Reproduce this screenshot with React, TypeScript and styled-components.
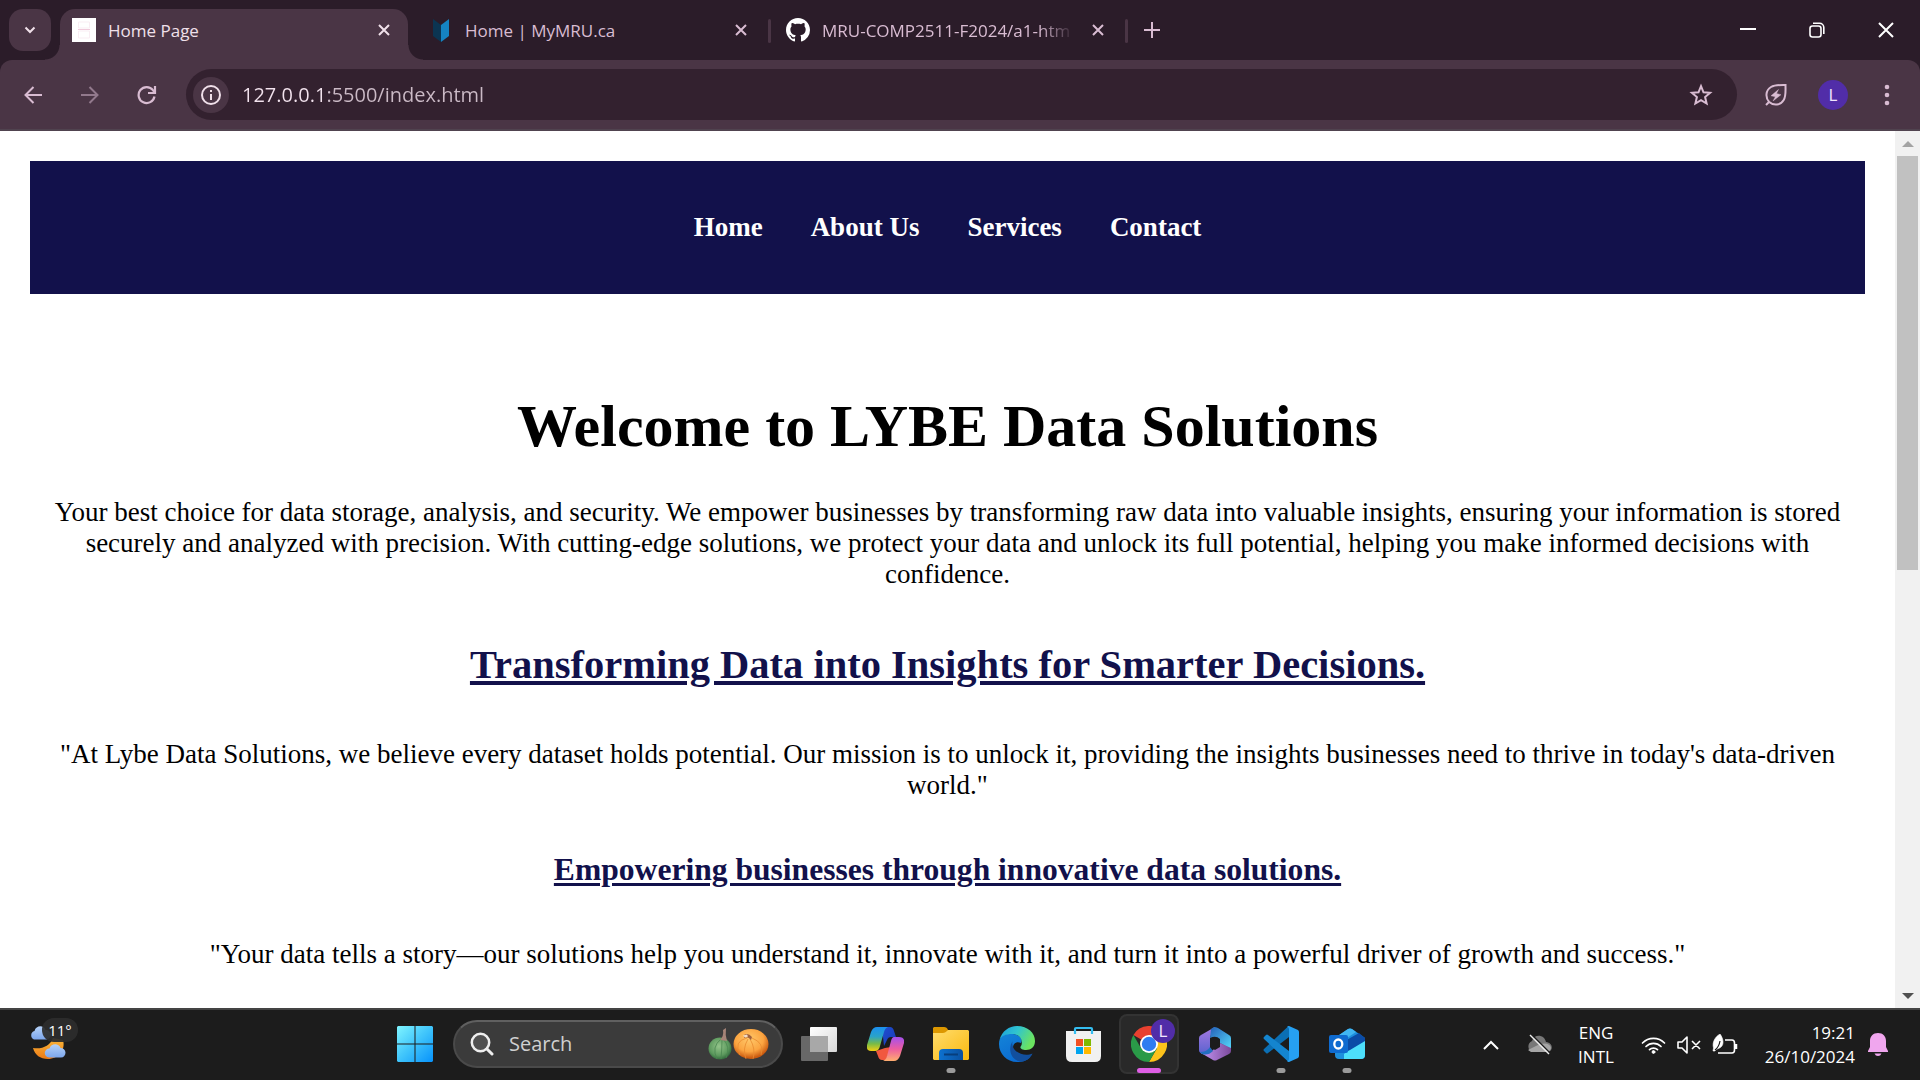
import React from "react";
import styled, { createGlobalStyle, css } from "styled-components";

const ui = '"Open Sans", "Noto Sans", "Liberation Sans", sans-serif';
const navy = "#12114b";
const strip = "#2b1c29";
const plum = "#4a3545";
const pink = "#d9bcd2";

const GlobalStyle = createGlobalStyle`
  *, *::before, *::after { box-sizing: border-box; }
  body { margin: 0; background: #fff; }
  button, input { font: inherit; color: inherit; border: 0; padding: 0; background: none; outline: none; }
  svg { display: block; flex: none; }
`;

const Desktop = styled.div`
  display: flex;
  flex-direction: column;
  height: 100vh;
  overflow: hidden;
`;

/* ---------- browser chrome ---------- */

const TabStrip = styled.header`
  display: flex;
  align-items: flex-end;
  height: 60px;
  padding-left: 9px;
  background: ${strip};
  color: ${pink};
  font: 17px/24px ${ui};
`;

const StripButton = styled.button<{ $filled?: boolean }>`
  display: grid;
  place-items: center;
  width: 42px;
  height: 42px;
  margin-bottom: 9px;
  border-radius: 14px;
  color: ${(p) => (p.$filled ? "#f0e0ea" : pink)};
  background: ${(p) => (p.$filled ? plum : "transparent")};
`;

const Divider = styled.span<{ $visible?: boolean }>`
  flex: none;
  width: 3px;
  height: 24px;
  margin: 0 3px 17px;
  border-radius: 2px;
  background: ${(p) => (p.$visible ? plum : "transparent")};
`;

const activeTab = css`
  background: ${plum};
  color: #f0e0ea;
  &::before,
  &::after {
    content: "";
    position: absolute;
    bottom: 0;
    width: 15px;
    height: 15px;
  }
  &::before {
    right: 100%;
    background: radial-gradient(circle at 0 0, transparent 14px, ${plum} 15px);
  }
  &::after {
    left: 100%;
    background: radial-gradient(circle at 100% 0, transparent 14px, ${plum} 15px);
  }
`;

const TabBox = styled.div<{ $active?: boolean }>`
  position: relative;
  display: flex;
  align-items: center;
  gap: 12px;
  flex: 0 1 348px;
  min-width: 0;
  height: 51px;
  padding: 0 12px 9px;
  border-radius: 15px 15px 0 0;
  ${(p) => p.$active && activeTab}
`;

const TabTitle = styled.span<{ $fade?: boolean }>`
  flex: 1;
  min-width: 0;
  padding-top: 2px;
  overflow: hidden;
  white-space: nowrap;
  ${(p) => p.$fade && "mask-image: linear-gradient(90deg, #000 calc(100% - 36px), transparent);"}
`;

const TabClose = styled.button`
  display: grid;
  place-items: center;
  width: 24px;
  height: 24px;
`;

const WindowControls = styled.div`
  display: flex;
  margin-left: auto;
  color: #fff;
`;

const WindowButton = styled.button`
  display: grid;
  place-items: center;
  width: 69px;
  height: 60px;
`;

const ToolbarBack = styled.div`
  background: ${strip};
`;

const Toolbar = styled.div`
  display: flex;
  align-items: center;
  gap: 15px;
  height: 71px;
  padding: 0 15px 0 12px;
  border-bottom: 2px solid #50434f;
  border-radius: 12px 12px 0 0;
  background: ${plum};
  color: ${pink};
`;

const ToolButton = styled.button<{ $dim?: boolean; $narrow?: boolean }>`
  display: grid;
  place-items: center;
  width: ${(p) => (p.$narrow ? 36 : 42)}px;
  height: 42px;
  opacity: ${(p) => (p.$dim ? 0.5 : 1)};
`;

const Omnibox = styled.div`
  display: flex;
  align-items: center;
  flex: 1;
  height: 51px;
  margin: 0 3px;
  padding: 0 15px 0 7px;
  border-radius: 26px;
  background: #33212f;
`;

const InfoButton = styled.button`
  display: grid;
  place-items: center;
  width: 36px;
  height: 36px;
  border-radius: 50%;
  background: ${plum};
  color: #f0e0ea;
`;

const Address = styled.input`
  flex: 1;
  min-width: 0;
  height: 32px;
  margin-left: 13px;
  font: 20px/32px ${ui};
  color: transparent;
  background: linear-gradient(90deg, #f3e3ee 82px, #cbbac6 82px);
  background-clip: text;
`;

const Avatar = styled.span<{ $size: number }>`
  display: grid;
  place-items: center;
  width: ${(p) => p.$size}px;
  height: ${(p) => p.$size}px;
  border-radius: 50%;
  background: #512da8;
  color: #f1e6ff;
  font: 17px/24px ${ui};
`;

/* ---------- web page ---------- */

const Viewport = styled.div`
  display: flex;
  flex: 1;
  min-height: 0;
  background: #fff;
`;

const Page = styled.main`
  flex: 1;
  min-width: 0;
  overflow: hidden;
  padding: 30px;
  color: #000;
  font: 27px/31px "Liberation Serif", "Times New Roman", serif;
  text-align: center;
`;

const SiteNav = styled.nav`
  padding: 51px 30px;
  background: ${navy};
`;

const NavList = styled.ul`
  display: flex;
  justify-content: center;
  gap: 48px;
  margin: 0;
  padding: 0;
  list-style: none;
`;

const NavLink = styled.a`
  color: #fff;
  font-weight: bold;
  text-decoration: none;
`;

const Hero = styled.section`
  padding: 98px 15px 0;
`;

const Title = styled.h1`
  margin: 0;
  font-size: 60px;
  line-height: 69px;
`;

const Heading = styled.h2`
  margin: 0;
  color: ${navy};
  line-height: 47px;
  text-decoration: underline 4px;
  text-underline-offset: 3px;
`;

const SubHeading = styled.h3`
  margin: 0;
  color: ${navy};
  line-height: 36px;
  text-decoration: underline 3px;
  text-underline-offset: 3px;
`;

const Text = styled.p<{ $top: number; $bottom: number }>`
  margin: ${(p) => p.$top}px 0 ${(p) => p.$bottom}px;
`;

const Scrollbar = styled.div`
  display: flex;
  flex-direction: column;
  width: 25px;
  background: #f1f1f1;
`;

const ScrollArrow = styled.button<{ $color: string }>`
  display: grid;
  place-items: center;
  height: 25px;
  color: ${(p) => p.$color};
`;

const ScrollTrack = styled.div`
  flex: 1;
  padding: 0 2px;
`;

const ScrollThumb = styled.div`
  height: 50%;
  background: #c1c1c1;
`;

/* ---------- taskbar ---------- */

const Taskbar = styled.footer`
  display: flex;
  align-items: stretch;
  height: 72px;
  border-top: 2px solid #444;
  background: #1c1c1c;
  color: #fff;
  font: 17px/24px ${ui};
`;

const Widgets = styled.div`
  flex: 0 0 382px;
  display: flex;
  align-items: center;
  padding-left: 30px;
`;

const WeatherButton = styled.button`
  position: relative;
  width: 48px;
  height: 54px;
`;

const Temperature = styled.span`
  position: absolute;
  top: 0;
  right: 0;
  width: 36px;
  height: 24px;
  border-radius: 12px;
  background: #2d2d2dee;
  font: 15px/24px ${ui};
`;

const TaskSlot = styled.button<{ $active?: boolean }>`
  position: relative;
  display: grid;
  place-items: center;
  width: 60px;
  height: 60px;
  margin: 4px 3px 0;
  border: 2px solid ${(p) => (p.$active ? "#333" : "transparent")};
  border-radius: 8px;
  background: ${(p) => (p.$active ? "#292929" : "transparent")};
`;

const Indicator = styled.span<{ $active?: boolean }>`
  position: absolute;
  bottom: -1px;
  left: 50%;
  width: ${(p) => (p.$active ? 24 : 9)}px;
  height: 5px;
  border-radius: 3px;
  background: ${(p) => (p.$active ? "#df5fe6" : "#9a9a9a")};
  transform: translateX(-50%);
`;

const AccountBadge = styled.span`
  position: absolute;
  top: 3px;
  right: 2px;
`;

const SearchBox = styled.label`
  display: flex;
  align-items: center;
  width: 330px;
  height: 48px;
  margin: 10px 3px 0 5px;
  padding: 0 12px 0 15px;
  border: 2px solid #4a4a4a;
  border-top-color: #606060;
  border-radius: 24px;
  background: #3b3b3b;
`;

const SearchInput = styled.input`
  flex: 1;
  min-width: 0;
  margin-left: 15px;
  font: 20px/28px ${ui};
  &::placeholder { color: #d0d0d0; opacity: 1; }
`;

const Tray = styled.div`
  display: flex;
  align-items: center;
  margin-left: auto;
  padding-right: 24px;
`;

const TrayButton = styled.button<{ $space?: number }>`
  display: grid;
  place-items: center;
  width: 36px;
  height: 48px;
  margin-right: ${(p) => p.$space ?? 0}px;
`;

const Language = styled.button`
  width: 48px;
  margin-right: 15px;
  text-align: center;
`;

const Clock = styled.button`
  width: 117px;
  padding-right: 5px;
  text-align: right;
`;

/* ---------- icons ---------- */

type StrokeProps = { size: number; d: string; width?: number; box?: number };

const Stroke = ({ size, d, width = 2, box = 24 }: StrokeProps) => (
  <svg width={size} height={size} viewBox={`0 0 ${box} ${box}`} fill="none" stroke="currentColor" strokeWidth={width}>
    <path d={d} />
  </svg>
);

const Cross = () => <Stroke size={12} box={12} d="M1 1l10 10M11 1L1 11" />;

const HomeFavicon = () => (
  <svg width="24" height="24">
    <path fill="#fff" d="M0 0h24v24H0z" />
    <path fill="none" stroke="#f9edf3" d="M6.500 4h11v6h-11zM6.500 13h11v7h-11z" />
    <path stroke="#f0cbdc" d="M6 11.500h12" />
  </svg>
);

const MruFavicon = () => (
  <svg width="24" height="24">
    <path fill="#0b3552" d="M4 1l8 6v17l-8-6z" />
    <path fill="#1583c2" d="M20 1l-8 6v17l8-6z" />
  </svg>
);

const GithubIcon = () => (
  <svg width="24" height="24" viewBox="0 0 16 16">
    <path
      fill="#fff"
      d="M8 0C3.580 0 0 3.580 0 8c0 3.540 2.290 6.530 5.470 7.590.4.070.55-.17.55-.38 0-.19-.01-.82-.01-1.490-2.010.37-2.530-.49-2.690-.94-.09-.23-.48-.94-.82-1.130-.28-.15-.68-.52-.01-.53.63-.01 1.080.58 1.230.82.72 1.210 1.870.87 2.330.66.07-.52.28-.87.51-1.070-1.780-.2-3.640-.89-3.640-3.950 0-.87.31-1.590.82-2.150-.08-.2-.36-1.020.08-2.120 0 0 .67-.21 2.200.82.64-.18 1.320-.27 2-.27s1.360.09 2 .27c1.530-1.040 2.200-.82 2.200-.82.44 1.100.16 1.920.08 2.120.51.56.82 1.270.82 2.150 0 3.070-1.870 3.750-3.650 3.950.29.25.54.73.54 1.480 0 1.070-.01 1.930-.01 2.200 0 .21.15.46.55.38A8.010 8.010 0 0 0 16 8c0-4.420-3.580-8-8-8z"
    />
  </svg>
);

const ReloadIcon = () => (
  <svg width="20" height="20" viewBox="0 0 20 20" fill="none" stroke="currentColor" strokeWidth="2.200">
    <path d="M17.500 11.500A8 8 0 1 1 16 5.200L17.500 7" />
    <path d="M18 1v7h-7" />
  </svg>
);

const RestoreIcon = () => (
  <svg width="16" height="16" fill="none" stroke="currentColor" strokeWidth="1.600">
    <rect x="1" y="4" width="11" height="11" rx="2.500" />
    <path d="M4 1.200h6.500a4.300 4.300 0 0 1 4.300 4.300V12" />
  </svg>
);

const InfoIcon = () => (
  <svg width="20" height="20" fill="none" stroke="currentColor" strokeWidth="2">
    <circle cx="10" cy="10" r="9" />
    <path d="M10 9v6M10 5v2" />
  </svg>
);

const StarIcon = () => (
  <svg width="24" height="24" viewBox="0 0 24 24" fill="none" stroke="currentColor" strokeWidth="2">
    <path d="M12 3.200l2.500 6.100 6.600.5-5 4.300 1.500 6.400-5.600-3.400-5.600 3.400 1.500-6.400-5-4.300 6.600-.5z" />
  </svg>
);

const LeafIcon = () => (
  <svg width="24" height="24" viewBox="0 0 24 24" fill="none" stroke="currentColor" strokeWidth="2">
    <path d="M2 22l3-3M5.200 19C1 14.500 1.700 7 7 4c4-2.300 9-2 14.500-2 0 6 .6 11-1.800 15-3.200 5.400-10 6-14.500 2z" />
    <path fill="currentColor" strokeWidth=".4" d="M14.500 6.500L7 12.800l4.300 1-2.300 4.200 8-6.300-4.500-1.200z" />
  </svg>
);

const DotsIcon = () => (
  <svg width="6" height="24" fill="currentColor">
    <circle cx="3" cy="4" r="2.300" />
    <circle cx="3" cy="12" r="2.300" />
    <circle cx="3" cy="20" r="2.300" />
  </svg>
);

const WeatherIcon = () => (
  <svg width="48" height="54" viewBox="0 0 48 54">
    <defs>
      <linearGradient id="cloud" x2="0" y2="1">
        <stop stopColor="#b5d2f8" />
        <stop offset="1" stopColor="#7ca6ec" />
      </linearGradient>
      <linearGradient id="moon" x2="0" y2="1">
        <stop stopColor="#fbb93a" />
        <stop offset="1" stopColor="#ec7a16" />
      </linearGradient>
    </defs>
    <path fill="url(#cloud)" d="M4 21.500a4.500 4.500 0 0 1 .5-8.500C6 7 14 7 15.500 12a4.700 4.700 0 0 1 1 9.500z" />
    <path fill="url(#moon)" d="M3 30c9 1.500 17-2 20-10l10 2c3 10-5 19-15 19C10 41 5 37 3 30z" />
    <path fill="url(#cloud)" d="M19 39.500a4.500 4.500 0 0 1 .5-9C21 25 29 25 30.500 30a4.700 4.700 0 0 1 .5 9.500z" />
  </svg>
);

const StartIcon = () => (
  <svg width="36" height="36" viewBox="0 0 35 35">
    <defs>
      <linearGradient id="start" gradientUnits="userSpaceOnUse" x2="35" y2="35">
        <stop stopColor="#80f5ff" />
        <stop offset=".5" stopColor="#3fc4fb" />
        <stop offset="1" stopColor="#0792fb" />
      </linearGradient>
    </defs>
    <path fill="url(#start)" d="M1 0h16v17H0V1zM18 0h16l1 1v16H18zM0 18h17v17H1l-1-1zM18 18h17v16l-1 1H18z" />
  </svg>
);

const SearchIcon = () => (
  <svg width="24" height="24" fill="none" stroke="#eee" strokeWidth="2.500" strokeLinecap="round">
    <circle cx="10.500" cy="10.500" r="8.700" fill="#505050" />
    <path strokeWidth="3" d="M17 17l5 5" />
  </svg>
);

const PumpkinIcon = () => (
  <svg width="62" height="34" viewBox="0 0 62 34">
    <defs>
      <radialGradient id="pumpkin" cx=".45" cy=".35" r=".62">
        <stop stopColor="#ffc86a" />
        <stop offset=".65" stopColor="#fba440" />
        <stop offset="1" stopColor="#c9590f" />
      </radialGradient>
      <radialGradient id="gourd" cx=".45" cy=".4" r=".6">
        <stop stopColor="#93c48a" />
        <stop offset=".7" stopColor="#5d9a5e" />
        <stop offset="1" stopColor="#346b3e" />
      </radialGradient>
    </defs>
    <ellipse cx="13" cy="21.500" rx="11.500" ry="11" fill="url(#gourd)" />
    <path fill="none" stroke="#4a8650" strokeWidth=".8" d="M14 12Q4 20 10 32M15 12Q15 22 14 32M16 12Q24 20 19 31" />
    <path fill="#a68478" d="M13 13q4-4 3-10l3-2q-1 7 1 13z" />
    <ellipse cx="44" cy="17" rx="17.500" ry="15" fill="url(#pumpkin)" />
    <path fill="none" stroke="#e98a30" strokeWidth=".8" d="M40 11Q26 14 33 28M41 12Q35 22 39 32M43 12Q49 22 46 32M45 11Q58 16 54 28" />
    <path fill="#a0603c" d="M37 8q4-3 8 2l-1 3q-3-4-7-2z" />
    <path fill="#f3dcc5" d="M36 8.500l4-1 1 2-3 1z" />
  </svg>
);

const TaskViewIcon = () => (
  <svg width="36" height="36">
    <defs>
      <linearGradient id="pane" x2="1" y2="1">
        <stop stopColor="#fff" />
        <stop offset="1" stopColor="#d8d8d8" />
      </linearGradient>
    </defs>
    <rect x="9" y="1" width="27" height="25" rx="1" fill="url(#pane)" />
    <rect y="10" width="27" height="25" rx="1" fill="#686868" />
    <path fill="#a8a8a8" d="M9 10h18v16H9z" />
  </svg>
);

const CopilotIcon = () => (
  <svg width="37" height="34" viewBox="0 0 37 34">
    <defs>
      <linearGradient id="cpA" x2="0" y2="1">
        <stop stopColor="#1b8ff0" />
        <stop offset=".4" stopColor="#2aa3c8" />
        <stop offset=".7" stopColor="#79bb46" />
        <stop offset="1" stopColor="#f4cf12" />
      </linearGradient>
      <linearGradient id="cpB" x2="0" y2="1">
        <stop stopColor="#a450ee" />
        <stop offset=".5" stopColor="#ed5da0" />
        <stop offset="1" stopColor="#ffae6e" />
      </linearGradient>
      <linearGradient id="cpC" x2="1" y2="1">
        <stop stopColor="#2050cf" />
        <stop offset="1" stopColor="#1738b8" />
      </linearGradient>
    </defs>
    <path fill="url(#cpC)" d="M15 0h8q3 0 4 4l2 6h-5q-3 0-4 3l-3 6z" />
    <path fill="#f1583f" d="M9 24l9-3 6-1-5 13h-4q-3 0-4-4z" />
    <path fill="url(#cpA)" d="M10 0h11q-3 1-4 5l-4 14q-1 5-5 5H4q-5 0-4-6L4 5q2-5 6-5z" />
    <path fill="url(#cpB)" d="M27 10h5q6 0 5 6l-4 13q-2 5-6 5H16q3-1 4-5l4-15q1-4 3-4z" />
  </svg>
);

const FolderIcon = () => (
  <svg width="36" height="34" viewBox="0 0 36 34">
    <defs>
      <linearGradient id="folder" x2="1" y2="1">
        <stop stopColor="#ffdc6d" />
        <stop offset="1" stopColor="#fab90e" />
      </linearGradient>
      <linearGradient id="dock" x2="1">
        <stop stopColor="#0d72d0" />
        <stop offset="1" stopColor="#0a509f" />
      </linearGradient>
    </defs>
    <path fill="#dc9700" d="M1 0h10q3 0 4 3v5H0V1z" />
    <path fill="url(#folder)" d="M0 6h10q2 0 4-2l1-1h20l1 1v28l-1 1H1l-1-1z" />
    <path fill="url(#dock)" d="M6 33V26q0-4 4-4h16q4 0 4 4v7z" />
    <path stroke="#073e7c" strokeWidth="2" d="M11 27.500h14" />
  </svg>
);

const EdgeIcon = () => (
  <svg width="36" height="36" viewBox="0 0 36 36">
    <defs>
      <linearGradient id="edA" x2="1" y2=".4">
        <stop stopColor="#1a9de0" />
        <stop offset=".5" stopColor="#30c4cf" />
        <stop offset="1" stopColor="#6be360" />
      </linearGradient>
      <linearGradient id="edB" x2=".6" y2="1">
        <stop stopColor="#1484d8" />
        <stop offset="1" stopColor="#0a6ad1" />
      </linearGradient>
    </defs>
    <path fill="url(#edB)" d="M0 18C0 8 8 7 14 8c7 1 10 5 8 9-4-2-8 0-8 5 0 7 9 13 17 9-3 4-8 5-13 5C8 36 0 28 0 18z" />
    <path fill="#124f9e" d="M14 15c-5 5-4 20 9 20.500 5-.5 9-4 10.500-8C27 30.500 17 28 14 21c-1-3-1-5 0-6z" />
    <path fill="url(#edA)" d="M.5 14C3 5 10 0 18 0c11 0 18 7 18 15 0 6-4 9-9 9-4 0-7-2-5-4 2-3 1-12-9-12C7 8 2 10 .5 14z" />
  </svg>
);

const StoreIcon = () => (
  <svg width="35" height="36" viewBox="0 0 35 36">
    <path fill="#f1f1f1" d="M0 5h35v25q0 6-6 6H6q-6 0-6-6z" />
    <path fill="none" stroke="#34bdf0" strokeWidth="2.200" d="M9 8V3q0-1 1-1h15q1 0 1 1v5" />
    <path fill="#f25022" d="M10 13h7v7h-7z" />
    <path fill="#7fba00" d="M18 13h7v7h-7z" />
    <path fill="#00a4ef" d="M10 21h7v7h-7z" />
    <path fill="#ffb900" d="M18 21h7v7h-7z" />
  </svg>
);

const ChromeIcon = () => (
  <svg width="36" height="36" viewBox="0 0 36 36">
    <path fill="#e8402f" d="M18 18L2.400 9A18 18 0 0 1 33.600 9z" />
    <path fill="#fcc21b" d="M18 18V9h15.600A18 18 0 0 1 18 36l7.800-13.500z" />
    <path fill="#2a9a48" d="M18 18l7.800 4.500L18 36A18 18 0 0 1 2.400 9l7.800 13.500z" />
    <path fill="#2a9a48" d="M10.200 22.500q7.800 9 15.600 0L18 18z" />
    <circle cx="18" cy="18" r="9" fill="#fff" />
    <circle cx="18" cy="18" r="7.200" fill="#2f7cf0" />
  </svg>
);

const M365Icon = () => (
  <svg width="32" height="34" viewBox="0 0 32 34">
    <defs>
      <linearGradient id="mA" x2="0" y2="1">
        <stop stopColor="#a77be2" />
        <stop offset="1" stopColor="#5b62cf" />
      </linearGradient>
      <linearGradient id="mB" x2="1" y2="1">
        <stop stopColor="#2460b8" />
        <stop offset="1" stopColor="#56d8fa" />
      </linearGradient>
      <linearGradient id="mC" x2="1">
        <stop stopColor="#c596f5" />
        <stop offset="1" stopColor="#7b4a9b" />
      </linearGradient>
    </defs>
    <path fill="url(#mA)" d="M16 0L2 8Q0 9 0 11v12q0 3 4 4 8 1 7-6V10z" />
    <path fill="url(#mB)" d="M12 2l3-2q2 0 4 1l11 7q2 1 2 3v11L21 16v-4q-4-4-10-1z" />
    <path fill="url(#mC)" d="M32 21v3q0 2-2 3l-12 6q-2 1-4 0L2 26q9 0 12-3l7-7z" />
    <path fill="#236fc0" d="M1 25q7 0 10-5l3 4q-5 5-11 3z" />
    <path fill="#1c1c1c" d="M16 11l5 3v6l-5 3-5-3v-6z" />
  </svg>
);

const CodeIcon = () => (
  <svg width="36" height="36" viewBox="0 0 36 36">
    <path fill="#0b6fb4" d="M26 0v11L5 27q-1 1-2 0l-2-2q-1-1 0-2L25 .5z" />
    <path fill="#1485cf" d="M26 36V25L5 9Q4 8 3 9l-2 2q-1 1 0 2l24 22.500z" />
    <path fill="#26a0f2" d="M26 0l9 4q1 1 1 2v24q0 1-1 2l-9 4q-1 0-2-1 2 0 2-2V3q0-2-2-2 1-1 2-1z" />
  </svg>
);

const OutlookIcon = () => (
  <svg width="36" height="32" viewBox="0 0 36 32">
    <path fill="#1d8fdd" d="M6 10L19 1q2-1 4 0l13 9v17q0 4-4 4H10q-4 0-4-4z" />
    <path fill="#40b6f2" d="M10 7l9-6q2-1 4 0l4 3-15 10z" />
    <path fill="#0b4ca6" d="M14 14L30 5l6 5v4L18 25z" />
    <path fill="#4ddffb" d="M36 13v14q0 4-4 4H15v-5q3-3 6-4z" />
    <rect y="7" width="19" height="18" rx="2" fill="#0f6bd0" />
    <ellipse cx="9.300" cy="16" rx="4" ry="4.500" fill="none" stroke="#fff" strokeWidth="2.300" />
  </svg>
);

const CloudOffIcon = () => (
  <svg width="26" height="22" viewBox="0 0 26 22">
    <path fill="#777" d="M6 18a6 6 0 0 1 0-11C8 0 18 0 20 8c8 1 7 10 1 10z" />
    <path fill="#a5a5a5" d="M2 16l12-6q10-2 11 4-1 4-5 4H5z" />
    <path stroke="#1c1c1c" strokeWidth="1.500" d="M6 1l19 19" />
    <path stroke="#eee" strokeWidth="1.500" d="M4 1l19 19" />
  </svg>
);

const WifiIcon = () => (
  <svg width="25" height="18" fill="none" stroke="currentColor" strokeWidth="1.700" strokeLinecap="round">
    <path d="M1.500 7a15.500 15.500 0 0 1 22 0M5 10.500a10.600 10.600 0 0 1 15 0M8.500 13.700a5.700 5.700 0 0 1 8 0" />
    <circle cx="12.500" cy="16" r="1.400" fill="currentColor" strokeWidth="1" />
  </svg>
);

const MuteIcon = () => (
  <svg width="24" height="18" fill="none" stroke="currentColor" strokeWidth="1.600" strokeLinejoin="round">
    <path d="M1 6h4l5-5v16l-5-5H1zM15 5l8 8M23 5l-8 8" />
  </svg>
);

const BatteryIcon = () => (
  <svg width="26" height="22" viewBox="0 0 26 22" fill="none" stroke="currentColor" strokeWidth="1.600">
    <path d="M13 6h7q2.500 0 2.500 3v7q0 3-2.500 3H6" />
    <path strokeWidth="2.500" d="M24 10v5" />
    <path fill="currentColor" strokeWidth=".6" d="M1.500 14C0 8 3 3 8 0c3 4 4.500 10 1 13-2 2-4 1-6 4L1 17z" />
    <path stroke="#1c1c1c" strokeWidth="1.200" d="M3 16q4-3 5-9" />
  </svg>
);

const BellIcon = () => (
  <svg width="20" height="24" fill="#f0a6ee">
    <path d="M10 0c5 0 8 3.500 8 8v6l2 4v1H0v-1l2-4V8c0-4.500 3-8 8-8zM6.500 20.500h7q-1 2.500-3.500 2.500t-3.500-2.500z" />
  </svg>
);

/* ---------- data ---------- */

const tabs = [
  { title: "Home Page", icon: <HomeFavicon />, active: true },
  { title: "Home | MyMRU.ca", icon: <MruFavicon /> },
  { title: "MRU-COMP2511-F2024/a1-htm", icon: <GithubIcon />, fade: true },
];

const links = ["Home", "About Us", "Services", "Contact"];

const apps = [
  { name: "Task view", icon: <TaskViewIcon /> },
  { name: "Copilot", icon: <CopilotIcon /> },
  { name: "File Explorer", icon: <FolderIcon />, running: true },
  { name: "Edge", icon: <EdgeIcon /> },
  { name: "Store", icon: <StoreIcon /> },
  { name: "Chrome", icon: <ChromeIcon />, running: true, active: true },
  { name: "Microsoft 365", icon: <M365Icon /> },
  { name: "Visual Studio Code", icon: <CodeIcon />, running: true },
  { name: "Outlook", icon: <OutlookIcon />, running: true },
];

export default function App() {
  return (
    <Desktop>
      <GlobalStyle />
      <TabStrip>
        <StripButton $filled aria-label="Search tabs">
          <Stroke size={12} box={12} d="M1.500 3.500L6 8l4.500-4.500" />
        </StripButton>
        {tabs.map((tab, i) => (
          <React.Fragment key={tab.title}>
            <Divider $visible={i > 1} />
            <TabBox $active={tab.active}>
              {tab.icon}
              <TabTitle $fade={tab.fade}>{tab.title}</TabTitle>
              <TabClose aria-label="Close tab">
                <Cross />
              </TabClose>
            </TabBox>
          </React.Fragment>
        ))}
        <Divider $visible />
        <StripButton aria-label="New tab">
          <Stroke size={16} box={16} d="M8 0v16M0 8h16" />
        </StripButton>
        <WindowControls>
          <WindowButton aria-label="Minimize">
            <Stroke size={16} box={16} d="M0 7h16" />
          </WindowButton>
          <WindowButton aria-label="Restore">
            <RestoreIcon />
          </WindowButton>
          <WindowButton aria-label="Close">
            <Stroke size={16} box={16} d="M1 1l14 14M15 1L1 15" />
          </WindowButton>
        </WindowControls>
      </TabStrip>

      <ToolbarBack>
        <Toolbar>
          <ToolButton aria-label="Back">
            <Stroke size={18} box={18} d="M18 9H2M9.500 1L1.500 9l8 8" />
          </ToolButton>
          <ToolButton $dim aria-label="Forward">
            <Stroke size={18} box={18} d="M0 9h16M8.500 1l8 8-8 8" />
          </ToolButton>
          <ToolButton aria-label="Reload">
            <ReloadIcon />
          </ToolButton>
          <Omnibox>
            <InfoButton aria-label="Site information">
              <InfoIcon />
            </InfoButton>
            <Address aria-label="Address" defaultValue="127.0.0.1:5500/index.html" spellCheck={false} />
            <ToolButton aria-label="Bookmark">
              <StarIcon />
            </ToolButton>
          </Omnibox>
          <ToolButton aria-label="Energy saver">
            <LeafIcon />
          </ToolButton>
          <ToolButton aria-label="Profile">
            <Avatar $size={30}>L</Avatar>
          </ToolButton>
          <ToolButton $narrow aria-label="Menu">
            <DotsIcon />
          </ToolButton>
        </Toolbar>
      </ToolbarBack>

      <Viewport>
        <Page>
          <SiteNav>
            <NavList>
              {links.map((name) => (
                <li key={name}>
                  <NavLink href="#">{name}</NavLink>
                </li>
              ))}
            </NavList>
          </SiteNav>
          <Hero>
            <Title>Welcome to LYBE Data Solutions</Title>
            <Text $top={36} $bottom={51}>
              Your best choice for data storage, analysis, and security. We empower businesses by transforming raw data
              into valuable insights, ensuring your information is stored securely and analyzed with precision. With
              cutting-edge solutions, we protect your data and unlock its full potential, helping you make informed
              decisions with confidence.
            </Text>
            <Heading>Transforming Data into Insights for Smarter Decisions.</Heading>
            <Text $top={51} $bottom={51}>
              "At Lybe Data Solutions, we believe every dataset holds potential. Our mission is to unlock it, providing
              the insights businesses need to thrive in today's data-driven world."
            </Text>
            <SubHeading>Empowering businesses through innovative data solutions.</SubHeading>
            <Text $top={51} $bottom={0}>
              "Your data tells a story—our solutions help you understand it, innovate with it, and turn it into a
              powerful driver of growth and success."
            </Text>
          </Hero>
        </Page>
        <Scrollbar>
          <ScrollArrow $color="#a3a3a3" aria-label="Scroll up">
            <svg width="12" height="6" fill="currentColor">
              <path d="M0 6l6-6 6 6z" />
            </svg>
          </ScrollArrow>
          <ScrollTrack>
            <ScrollThumb />
          </ScrollTrack>
          <ScrollArrow $color="#505050" aria-label="Scroll down">
            <svg width="12" height="6" fill="currentColor">
              <path d="M0 0l6 6 6-6z" />
            </svg>
          </ScrollArrow>
        </Scrollbar>
      </Viewport>

      <Taskbar>
        <Widgets>
          <WeatherButton aria-label="Weather">
            <WeatherIcon />
            <Temperature>11°</Temperature>
          </WeatherButton>
        </Widgets>
        <TaskSlot aria-label="Start">
          <StartIcon />
        </TaskSlot>
        <SearchBox>
          <SearchIcon />
          <SearchInput placeholder="Search" aria-label="Search" />
          <PumpkinIcon />
        </SearchBox>
        {apps.map((app) => (
          <TaskSlot key={app.name} $active={app.active} aria-label={app.name}>
            {app.icon}
            {app.active && (
              <AccountBadge>
                <Avatar $size={24}>L</Avatar>
              </AccountBadge>
            )}
            {app.running && <Indicator $active={app.active} />}
          </TaskSlot>
        ))}
        <Tray>
          <TrayButton $space={12} aria-label="Hidden icons">
            <Stroke size={16} box={16} d="M1 12l7-7 7 7" />
          </TrayButton>
          <TrayButton $space={15} aria-label="OneDrive">
            <CloudOffIcon />
          </TrayButton>
          <Language>
            ENG
            <br />
            INTL
          </Language>
          <TrayButton aria-label="Network">
            <WifiIcon />
          </TrayButton>
          <TrayButton aria-label="Volume">
            <MuteIcon />
          </TrayButton>
          <TrayButton aria-label="Battery">
            <BatteryIcon />
          </TrayButton>
          <Clock>
            19:21
            <br />
            26/10/2024
          </Clock>
          <TrayButton aria-label="Notifications">
            <BellIcon />
          </TrayButton>
        </Tray>
      </Taskbar>
    </Desktop>
  );
}
